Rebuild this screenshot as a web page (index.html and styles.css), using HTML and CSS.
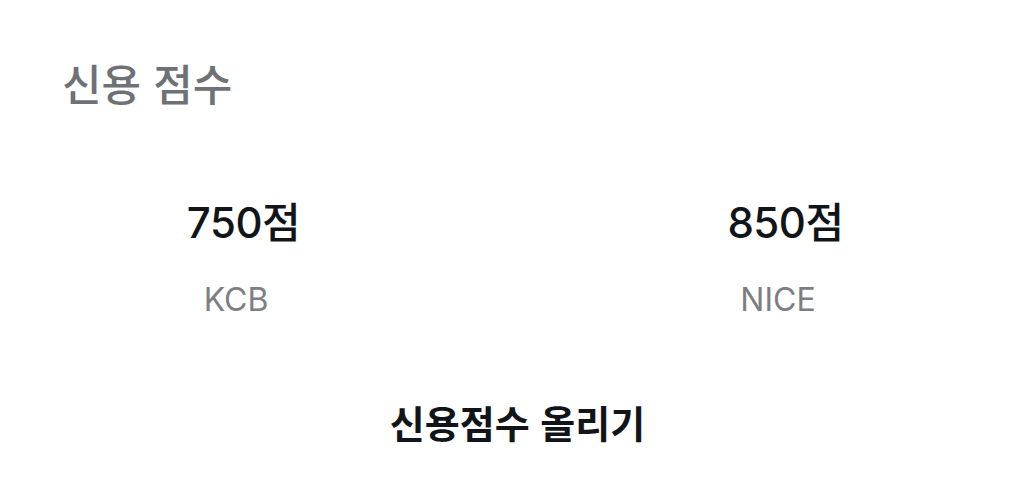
FILE: index.html
```html
<!DOCTYPE html>
<html lang="ko">
<head>
<meta charset="utf-8">
<link rel="stylesheet" href="styles.css">
</head>
<body>
<section class="card">
  <h1 class="title">신용 점수</h1>
  <div class="scores">
    <div class="score">
      <div class="score-value">750점</div>
      <div class="score-label">KCB</div>
    </div>
    <div class="score">
      <div class="score-value">850점</div>
      <div class="score-label">NICE</div>
    </div>
  </div>
  <div class="cta">신용점수 올리기</div>
</section>
</body>
</html>
```

FILE: styles.css
```css
html, body {
  margin: 0;
  padding: 0;
  background: #ffffff;
}
body {
  font-family: "Inter", "Noto Sans CJK KR", sans-serif;
  width: 1035px;
  height: 501px;
  overflow: hidden;
}
.card {
  display: flex;
  flex-direction: column;
  padding-top: 54px;
}
.title {
  margin: 0 0 0 62px;
  font-size: 43px;
  line-height: 56px;
  font-weight: 500;
  color: #6e7175;
  font-family: "Noto Sans CJK KR", sans-serif;
}
.scores {
  display: grid;
  grid-template-columns: 472px 472px;
  column-gap: 70px;
  margin-top: 87px;
}
.score {
  display: flex;
  flex-direction: column;
  align-items: center;
}
.score-value {
  padding-left: 15px;
  font-size: 42px;
  line-height: 52px;
  font-weight: 500;
  color: #111418;
  letter-spacing: -0.5px;
}
.score-label {
  margin-top: 32px;
  font-size: 32px;
  line-height: 38px;
  color: #7b7e83;
}
.cta {
  margin-top: 79px;
  text-align: center;
  font-size: 38px;
  line-height: 48px;
  font-weight: 600;
  color: #111418;
  font-family: "Noto Sans CJK KR", sans-serif;
}
```
